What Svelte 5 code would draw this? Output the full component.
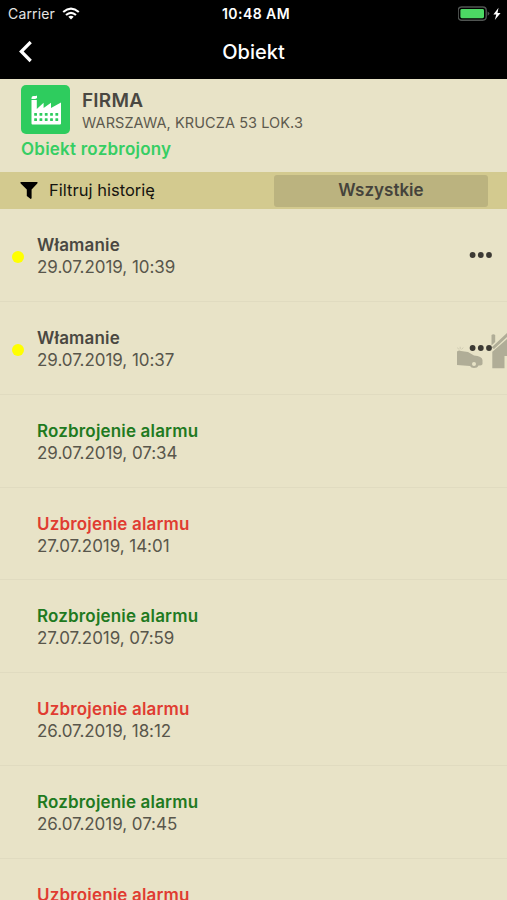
<script>
	let object = {
		name: 'FIRMA',
		address: 'WARSZAWA, KRUCZA 53 LOK.3',
		status: 'Obiekt rozbrojony',
	};

	let events = [
		{ type: 'alert', title: 'Włamanie', date: '29.07.2019, 10:39' },
		{ type: 'alert', title: 'Włamanie', date: '29.07.2019, 10:37', car: true },
		{ type: 'disarm', title: 'Rozbrojenie alarmu', date: '29.07.2019, 07:34' },
		{ type: 'arm', title: 'Uzbrojenie alarmu', date: '27.07.2019, 14:01' },
		{ type: 'disarm', title: 'Rozbrojenie alarmu', date: '27.07.2019, 07:59' },
		{ type: 'arm', title: 'Uzbrojenie alarmu', date: '26.07.2019, 18:12' },
		{ type: 'disarm', title: 'Rozbrojenie alarmu', date: '26.07.2019, 07:45' },
		{ type: 'arm', title: 'Uzbrojenie alarmu', date: '' },
	];
</script>

<main>
	<header>
		<div class="statusbar">
			<div class="carrier">
				<span>Carrier</span>
				<svg width="18" height="13" viewBox="0 0 18 13" fill="none" stroke="#fff" stroke-width="2.1">
					<path d="M1.2 5 Q9 -1.8 16.8 5" />
					<path d="M4 8 Q9 3.6 14 8" />
					<path d="M9 12.4 L6.3 9.7 Q9 7.6 11.7 9.7 Z" fill="#fff" stroke="none" />
				</svg>
			</div>
			<span class="clock">10:48 AM</span>
			<div class="power">
				<svg width="44" height="16" viewBox="0 0 44 16">
					<rect x="0.2" y="1" width="28" height="13.2" rx="3.4" fill="#000" stroke="#505452" stroke-width="1.4" />
					<rect x="2.4" y="3" width="23.6" height="9.2" rx="1.4" fill="#4cd964" />
					<path d="M29.6 5.4 q1.8 0.8 1.8 2.2 t-1.8 2.2 z" fill="#505452" />
					<path d="M40.5 1.8 L35.4 8.6 H38.3 L36.8 14 L42.6 6.9 H39.5 Z" fill="#fff" />
				</svg>
			</div>
		</div>
		<div class="navbar">
			<svg class="back" width="14" height="22" viewBox="0 0 14 22" fill="none" stroke="#fff" stroke-width="3.2">
				<path d="M12.7 1 L3.3 10.5 L12.7 20" />
			</svg>
			<h1>Obiekt</h1>
		</div>
	</header>

	<section class="object">
		<div class="info">
			<div class="logo">
				<svg width="30" height="30" viewBox="0 0 30 30">
					<path fill="#fff" d="M.5 3 Q.5 1 2.5 1 H5 Q6 1 6 0 V3 Q5 4 3.8 4 H.5 Z M.5 5 H5.8 V14 L12.6 7.8 V13 L20 7.8 V13 L30 7.5 V28.5 Q30 29.5 29 29.5 H1.5 Q.5 29.5 .5 28.5 Z" />
					<g fill="#2ecc5e">
						{#each [18, 23.2] as y}
							{#each [3.2, 8.5, 13.8, 19.1, 24.4] as x}
								<rect {x} {y} width="2.8" height="2.8" rx="0.5" />
							{/each}
						{/each}
					</g>
				</svg>
			</div>
			<div>
				<h2>{object.name}</h2>
				<p class="address">{object.address}</p>
			</div>
		</div>
		<p class="state">{object.status}</p>
	</section>

	<section class="filter">
		<svg width="18" height="18" viewBox="0 0 18 18">
			<path fill="#000" d="M.8 0 H17.2 Q18 .5 17.3 1.4 L11.6 7.5 V16.1 Q11.4 17.3 10.4 16.7 L6.8 14 V7.5 L.7 1.4 Q0 .5 .8 0 Z" />
		</svg>
		<span class="label">Filtruj historię</span>
		<button>Wszystkie</button>
	</section>

	<ul>
		{#each events as event}
			<li class={event.type}>
				{#if event.type == 'alert'}
					<i class="dot"></i>
				{/if}
				<div class="event">
					<h3>{event.title}</h3>
					<p>{event.date}</p>
				</div>
				{#if event.car}
					<svg class="car" width="50" height="38" viewBox="0 0 50 38" fill="#b0ad97">
						<path d="M0 19.5 Q2 18 4 19 L11 20 L17 23.5 Q25 24 25.5 28 V32 Q25 33.5 21.5 33.5 Q20.5 36 17 36 Q14 36 13 34 L0 33 Z" />
						<circle cx="17" cy="32" r="2" fill="#e8e3c7" />
						<path d="M0.3 15.5 l1.6 2 M3.2 14.8 v2.4 M6.2 15.5 l-1.6 2" stroke="#c8c4ab" stroke-width=".8" />
						<path d="M34.5 3 Q36.3 1.5 38.2 3 V10 L34.5 13.4 Z M34.5 15.5 L50 1 V5 L37 17 Z M35.3 19.8 L50 7 V24 H47.5 V36.3 H35.3 Z" />
					</svg>
				{/if}
				{#if event.type == 'alert'}
					<svg class="more" width="24" height="6" viewBox="0 0 24 6" fill="#3c3a34">
						<circle cx="3.6" cy="3" r="2.9" />
						<circle cx="11.8" cy="3" r="2.9" />
						<circle cx="20" cy="3" r="2.9" />
					</svg>
				{/if}
			</li>
		{/each}
	</ul>
</main>

<style>
	:global(body) {
		background: #e8e3c7;
		overflow: hidden;
	}

	main {
		height: 900px;
		overflow: hidden;
		font-family: Inter, "Liberation Sans", sans-serif;
		color: #4a4842;
		background: #e8e3c7;
	}

	h1, h2, h3, p, ul {
		margin: 0;
		padding: 0;
	}

	svg {
		display: block;
		flex: none;
	}

	header {
		height: 79px;
		background: #000;
		color: #fff;
	}

	.statusbar {
		display: grid;
		grid-template-columns: 1fr auto 1fr;
		align-items: center;
		height: 27px;
		padding: 0 5px 0 8px;
		font-size: 14px;
	}

	.carrier {
		display: flex;
		align-items: center;
		gap: 7px;
		color: #e4e4e4;
		letter-spacing: 0.15px;
	}

	.clock {
		font-weight: 600;
		letter-spacing: 0.45px;
		padding-left: 2px;
	}

	.power {
		display: flex;
		justify-content: flex-end;
	}

	.navbar {
		display: grid;
		grid-template-columns: 1fr auto 1fr;
		align-items: center;
		height: 50px;
		padding: 0 18px;
	}

	h1 {
		font-size: 20px;
		font-weight: 500;
	}

	.object {
		height: 93px;
		box-sizing: border-box;
		padding: 6px 21px 0;
	}

	.info {
		display: flex;
		gap: 12px;
	}

	.logo {
		display: flex;
		align-items: center;
		justify-content: center;
		width: 49px;
		height: 49px;
		border-radius: 5px;
		background: #2ecc5e;
	}

	h2 {
		margin-top: 4px;
		font-size: 19px;
		line-height: 23px;
		font-weight: 600;
		letter-spacing: 0.2px;
	}

	.address {
		font-size: 14.5px;
		line-height: 21px;
		letter-spacing: 0.08px;
		color: #5d5a4e;
	}

	.state {
		margin-top: 5px;
		font-size: 17px;
		line-height: 20px;
		font-weight: 600;
		letter-spacing: 0.23px;
		color: #36ce63;
	}

	.filter {
		display: flex;
		align-items: center;
		height: 37px;
		padding: 0 19px 0 20px;
		background: #d3ca8f;
	}

	.label {
		flex: 1;
		margin: 0 0 2px 11px;
		font-size: 16.5px;
		letter-spacing: 0.02px;
		color: #16150f;
	}

	button {
		width: 214px;
		height: 32px;
		padding: 0 0 1px;
		border: 0;
		border-radius: 3px;
		background: #bbb37f;
		color: #45433b;
		font: 600 17px Inter, "Liberation Sans", sans-serif;
	}

	ul {
		list-style: none;
	}

	li {
		position: relative;
		display: flex;
		align-items: center;
		height: 92.86px;
		box-sizing: border-box;
		padding: 0 14px 0 37px;
		border-bottom: 1px solid #e0dbc0;
	}

	.event {
		flex: 1;
		padding-top: 2px;
	}

	h3 {
		font-size: 17px;
		line-height: 22px;
		font-weight: 600;
		letter-spacing: 0.17px;
	}

	.event p {
		height: 22px;
		font-size: 17px;
		line-height: 22px;
		letter-spacing: -0.05px;
		color: #58564b;
	}

	.disarm h3 {
		color: #1f7a1f;
	}

	.arm h3 {
		color: #e03c31;
	}

	.dot {
		position: absolute;
		left: 12px;
		top: 42px;
		width: 12px;
		height: 12px;
		border-radius: 50%;
		background: #ffff00;
	}

	.car {
		position: absolute;
		right: 0;
		top: 30px;
	}

	.more {
		position: relative;
	}
</style>
